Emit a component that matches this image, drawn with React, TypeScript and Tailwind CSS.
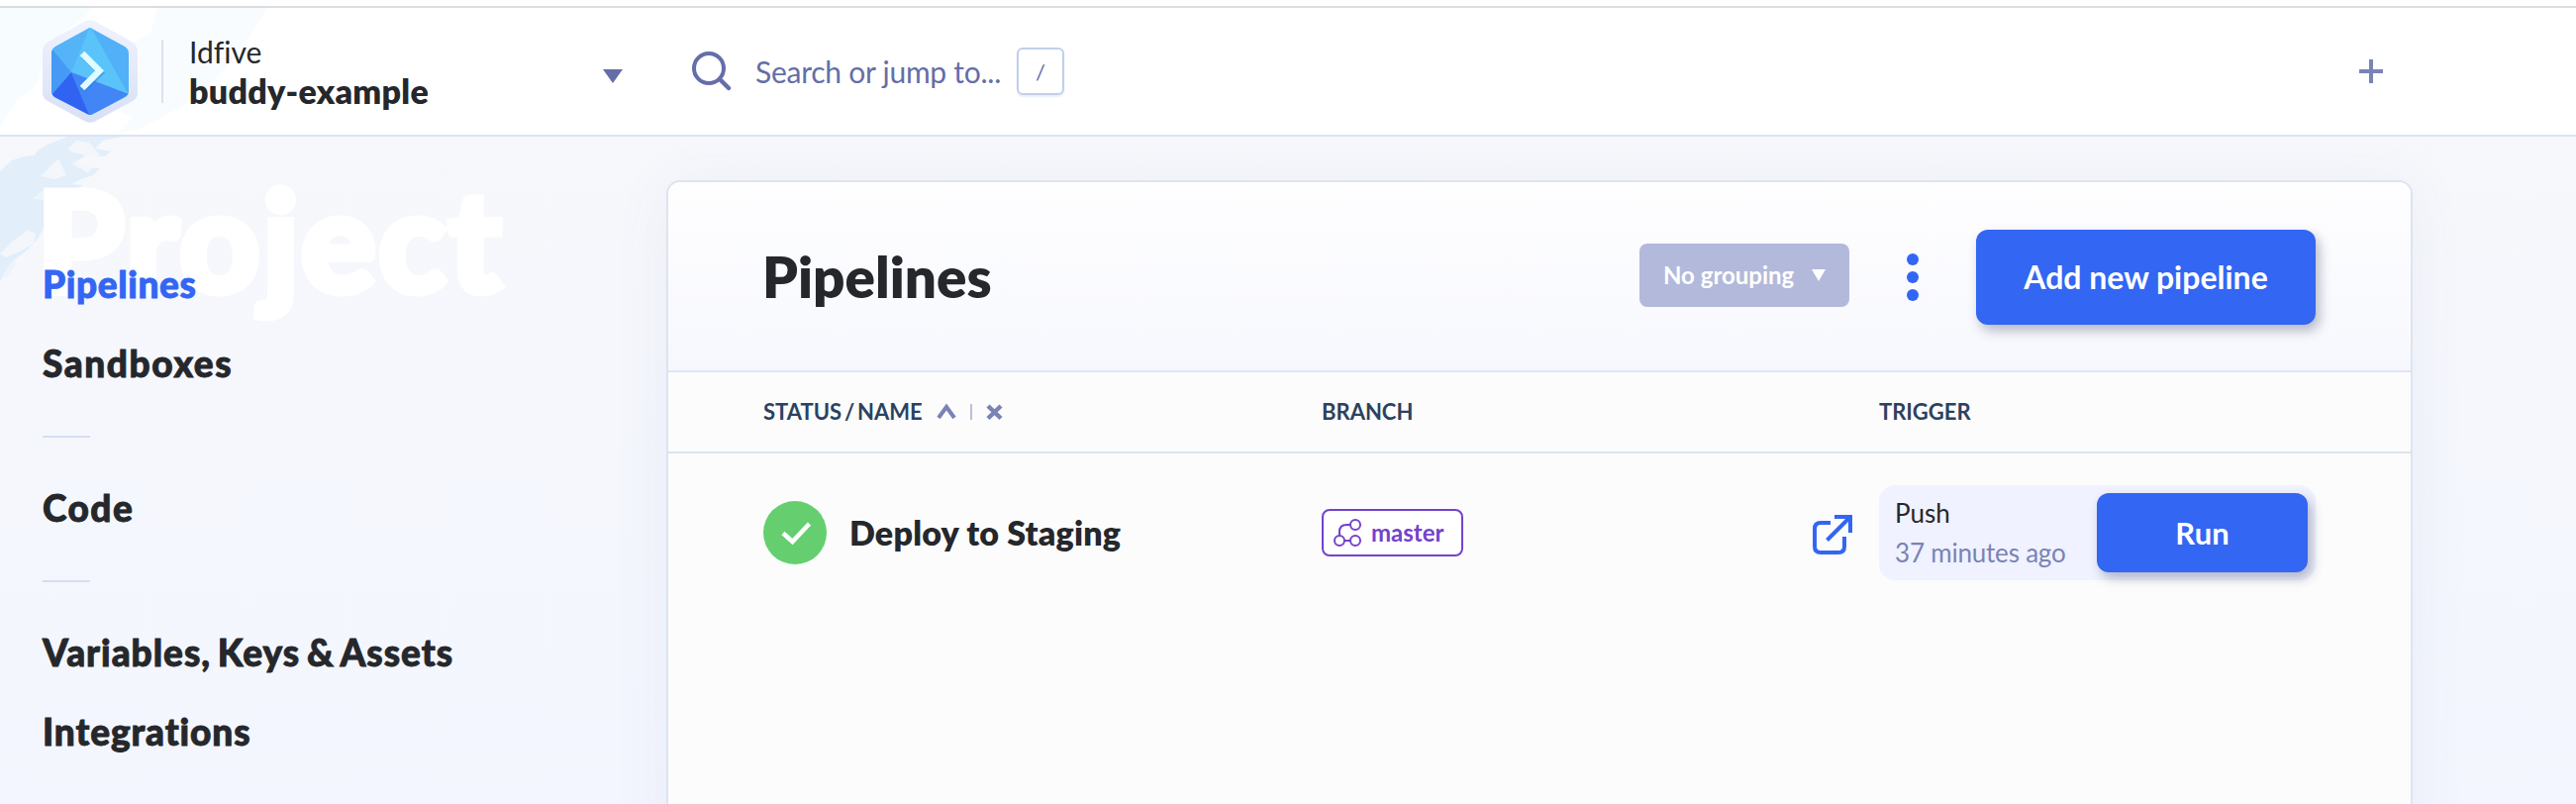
import React from "react";

function Logo() {
  return (
    <svg width="96" height="106" viewBox="0 0 96 106" className="shrink-0">
      <defs>
        <linearGradient id="rim" x1="0" y1="0" x2="0" y2="1">
          <stop offset="0" stopColor="#f0f3fd" />
          <stop offset="1" stopColor="#d8e0f6" />
        </linearGradient>
        <clipPath id="gem">
          <path d="M45 9.500Q48 7 51 9.500L83 27Q87 29.500 87 34V72Q87 76 83 78.500L51 95Q48 97 45 95L13 78.500Q9 76 9 72V34Q9 29.500 13 27Z" />
        </clipPath>
      </defs>
      <path d="M43 1.500Q48 -1 53 1.500L90 22Q96 26 96 32V74Q96 79 91 82L53 102.500Q48 105 43 102.500L5 82Q0 79 0 74V32Q0 26 6 22Z" fill="url(#rim)" />
      <g clipPath="url(#gem)">
        <rect x="9" y="6" width="78" height="92" fill="#51b0f7" />
        <path d="M48 6L87 76L29 53Z" fill="#5ac4fa" />
        <path d="M9 29L29 53L48 6Z" fill="#54b4f7" />
        <path d="M9 29L29 53L9 76Z" fill="#449af4" />
        <path d="M29 53L87 75L48 98Z" fill="#4285f4" />
        <path d="M29 53L9 76V98H48Z" fill="#3163f2" />
      </g>
      <path d="M40 34L57.500 51.500L40 69" transform="translate(1 2)" fill="none" stroke="#2f7fe4" strokeOpacity="0.5" strokeWidth="6.500" />
      <path d="M40 34L57.500 51.500L40 69" fill="none" stroke="#dffcff" strokeWidth="6.500" />
    </svg>
  );
}

function MapBackdrop() {
  return (
    <svg width="300" height="300" viewBox="0 0 300 300" className="absolute left-0 top-0">
      <path d="M0 8H92L83 20L62 34L44 60L38 84L14 104L0 128Z" fill="#f7fcff" />
      <path d="M158 8H270L253 36L228 70L190 104L160 120L140 131L120 134L134 118L118 112L138 98L140 52L130 44L152 34Z" fill="#f9fcff" />
      <path d="M0 173L12 162L24 158L35 157L38 152L50 145L56 143L68 138H110L122 138L104 142L96 150L112 153L106 158L86 157L76 164L83 170L101 170L94 177L82 181L72 186L84 187L74 193L60 192L50 196L45 204V228L39 240L28 252L15 262L5 276L0 284Z" fill="#e2eef9" />
      <path d="M41 178L59 160L67 177L55 181ZM68 150L78 142L90 144L102 157L92 158L74 154ZM73 165L82 160L80 168L96 166L88 175L83 171L78 169ZM0 256L12 244L28 232L36 236L34 246L20 254L6 260Z" fill="#f3f6fb" />
      <path d="M3 277L12 264L16 266L7 280ZM32 201L44 192L52 194L44 202Z" fill="#edf4fc" />
    </svg>
  );
}

function Header() {
  return (
    <header className="relative flex h-[138px] items-start border-b-2 border-[#dae4f3] pl-[43px] pr-[195px] pt-5">
      <Logo />
      <div className="ml-6 mt-5 h-16 w-0.5 bg-[#dce1ee]" />
      <div className="ml-[26px] w-[418px] pt-[13px] text-[#25272b]">
        <div className="text-[30px] leading-[39px] [font-variant-ligatures:none]">Idfive</div>
        <div className="text-[34px] font-extrabold leading-10 tracking-[0.25px]">buddy-example</div>
      </div>
      <svg width="20" height="14" viewBox="0 0 20 14" className="mt-[50px]">
        <path d="M0 0H20L10 14Z" fill="#646ea8" />
      </svg>
      <svg width="40" height="40" viewBox="0 0 40 40" fill="none" stroke="#646ea8" className="ml-[70px] mt-8">
        <circle cx="17" cy="17" r="15" strokeWidth="4" />
        <path d="M28 28L37 37" strokeWidth="4.500" strokeLinecap="round" />
      </svg>
      <div className="ml-[24px] mt-8 w-[264px] whitespace-nowrap text-[30px] leading-10 tracking-[-0.25px] text-[#646ea8]">Search or jump to...</div>
      <div className="mt-7 flex h-12 w-12 items-center justify-center rounded-md border-2 border-[#c1cfe9] text-[22px] text-[#646ea8] shadow-[0_2px_2px_#e8eefb]">/</div>
      <svg width="24" height="24" viewBox="0 0 24 24" className="ml-auto mt-10">
        <path d="M12 0V24M0 12H24" stroke="#7a83b5" strokeWidth="4" />
      </svg>
    </header>
  );
}

function NavItem({ label, spacing, active }: { label: string; spacing: string; active?: boolean }) {
  return (
    <a className={`block h-20 whitespace-nowrap text-[37px] font-black leading-[78px] [-webkit-text-stroke:0.9px_currentColor] ${spacing} ${active ? "text-[#3366f3]" : "text-[#25272b]"}`}>
      {label}
    </a>
  );
}

function NavDivider() {
  return (
    <div className="flex h-[66px] pt-[32px]">
      <div className="h-0.5 w-12 bg-[#d5def1]" />
    </div>
  );
}

function Sidebar() {
  return (
    <aside className="relative w-[673px] shrink-0 pl-[43px] pt-[110px]">
      <div className="absolute left-[37px] top-[17px] whitespace-nowrap text-[142px] font-black leading-[170px] tracking-[2px] text-white [-webkit-text-stroke:7px_white]">Project</div>
      <nav className="relative">
        <NavItem label="Pipelines" spacing="tracking-[0.6px]" active />
        <NavItem label="Sandboxes" spacing="tracking-[1.6px]" />
        <NavDivider />
        <NavItem label="Code" spacing="tracking-[1.5px]" />
        <NavDivider />
        <NavItem label="Variables, Keys & Assets" spacing="tracking-[1px] [word-spacing:-3px]" />
        <NavItem label="Integrations" spacing="tracking-[0.9px]" />
      </nav>
    </aside>
  );
}

function CardHeader() {
  return (
    <div className="flex h-48 items-start border-b-2 border-[#dfe5f9] bg-linear-to-b from-[#fefeff] to-[#f7f8fe] pl-24 pr-24 pt-12">
      <h1 className="-ml-px pt-[12px] text-[56.5px] font-extrabold leading-[70px] text-[#25272b]">Pipelines</h1>
      <div className="ml-auto mt-[14px] flex h-16 w-[212px] items-center rounded-lg bg-[#b3b9da] pl-6 text-[24px] font-bold text-white">
        <span className="w-[150px] whitespace-nowrap">No grouping</span>
        <svg width="14" height="12" viewBox="0 0 14 12">
          <path d="M0 0H14L7 12Z" fill="white" />
        </svg>
      </div>
      <svg width="12" height="48" viewBox="0 0 12 48" fill="#3366f3" className="ml-[58px] mt-6">
        <circle cx="6" cy="6" r="6" />
        <circle cx="6" cy="24" r="6" />
        <circle cx="6" cy="42" r="6" />
      </svg>
      <button className="ml-[58px] h-24 w-[343px] whitespace-nowrap rounded-xl bg-[#3366f3] text-[32px] font-bold text-white shadow-[4px_6px_12px_rgba(40,50,80,0.32)]">
        Add new pipeline
      </button>
    </div>
  );
}

function TableHead() {
  return (
    <div className="flex h-[82px] items-center border-b-2 border-[#dae4f0] pb-px pl-24 text-[22px] font-bold text-[#2b425f]">
      <div className="flex w-[564px] items-center">
        <span className="w-[175px] whitespace-nowrap [word-spacing:-2.5px]">STATUS / NAME</span>
        <svg width="68" height="18" viewBox="0 0 68 18" fill="none" stroke="#7a83b5">
          <path d="M2 15L10 4L18 15" strokeWidth="4" />
          <path d="M35 1V17" stroke="#b9bfdb" strokeWidth="2" />
          <path d="M52 3L65 15.500M65 3L52 15.500" strokeWidth="4.500" />
        </svg>
      </div>
      <div className="w-[563px]">BRANCH</div>
      <div>TRIGGER</div>
    </div>
  );
}

function PipelineRow() {
  return (
    <div className="flex items-start pl-24 pt-8">
      <div className="flex w-[564px] items-center pt-4">
        <svg width="64" height="64" viewBox="0 0 64 64">
          <circle cx="32" cy="32" r="32" fill="#65cf70" />
          <path d="M20 32.500L29.500 41L46.500 23" fill="none" stroke="white" strokeWidth="4.500" />
        </svg>
        <span className="ml-[23px] whitespace-nowrap text-[34px] font-extrabold leading-10 tracking-[0.2px] text-[#25272b]">Deploy to Staging</span>
      </div>
      <div className="w-[496px] pt-6">
        <div className="flex h-12 w-[143px] items-center rounded-lg border-2 border-[#7442cc] bg-white pl-[9px] text-[24px] font-bold text-[#7442cc]">
          <svg width="30" height="30" viewBox="0 0 30 30" fill="none" stroke="#7442cc" strokeWidth="2">
            <circle cx="23" cy="7" r="5" />
            <circle cx="7" cy="23" r="5" />
            <circle cx="23" cy="23" r="5" />
            <path d="M18 7H14Q7 7 7 14V18M12 23H18" />
          </svg>
          <span className="ml-[9px]">master</span>
        </div>
      </div>
      <svg width="40" height="40" viewBox="0 0 40 40" fill="none" stroke="#3366f3" strokeWidth="4" className="mt-[30px]">
        <path d="M18 8H8Q2 8 2 14V32Q2 38 8 38H26Q32 38 32 32V22" />
        <path d="M22 2H38V18M37 3L14.500 25.500" />
      </svg>
      <div className="ml-[27px] flex h-24 w-[441px] rounded-2xl bg-[#f0f2ff] pl-4 pt-2">
        <div className="w-[204px] whitespace-nowrap text-[26px] leading-10">
          <div className="text-[#25272b]">Push</div>
          <div className="tracking-[-0.2px] text-[#7a83b5]">37 minutes ago</div>
        </div>
        <button className="h-20 w-[213px] rounded-xl bg-[#3366f3] text-[31px] font-bold text-white shadow-[4px_6px_12px_rgba(40,50,80,0.32)]">Run</button>
      </div>
    </div>
  );
}

export default function App() {
  return (
    <div className="relative h-[812px] w-[2602px] overflow-hidden bg-[#f5f7fc] font-['Lato',sans-serif]">
      <div className="absolute inset-0 bg-linear-to-b from-[#f7f8fb] to-[#f3f6fe]" />
      <div className="absolute inset-x-0 top-0 h-[138px] border-t-[6px] border-white bg-white">
        <div className="h-0.5 bg-[#dcdddd]" />
      </div>
      <MapBackdrop />
      <Header />
      <div className="relative flex">
        <Sidebar />
        <main className="mt-11 h-[700px] w-[1764px] overflow-hidden rounded-t-[14px] border-2 border-[#dfe3ee] bg-[#fcfcfd] shadow-[0_8px_60px_rgba(80,100,160,0.07)]">
          <CardHeader />
          <TableHead />
          <PipelineRow />
        </main>
      </div>
    </div>
  );
}
